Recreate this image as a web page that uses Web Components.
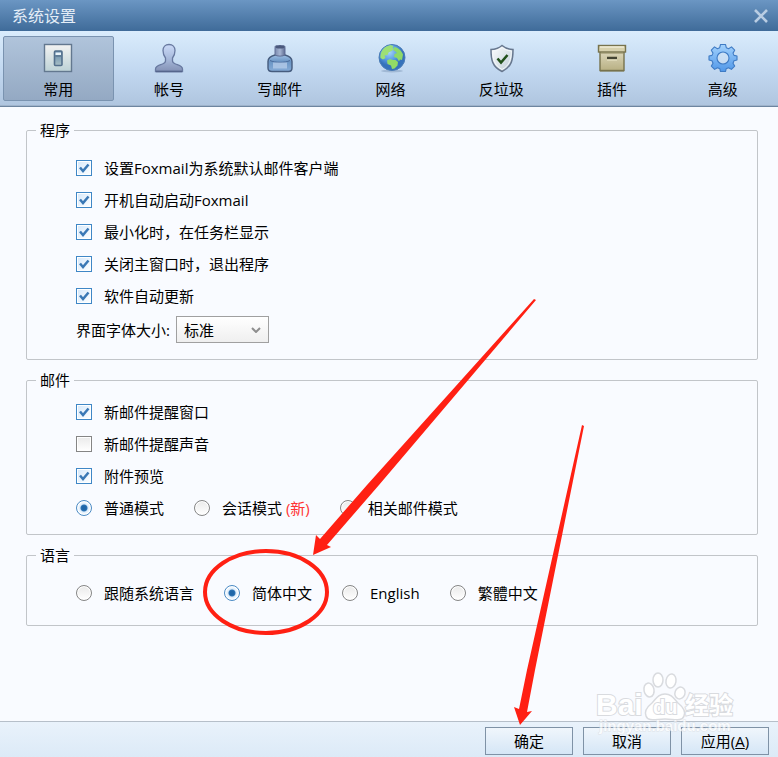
<!DOCTYPE html>
<html lang="zh-CN">
<head>
<meta charset="utf-8">
<meta name="viewport" content="width=device-width, initial-scale=1">
<title>系统设置</title>
<style>
    body {
        margin: 0;
        background: #f9fbff;
        color: #000;
        font: 15px/20px "Open Sans", "Noto Sans CJK SC", sans-serif;
    }
</style>
</head>
<body>
<settings-window heading="系统设置">
    <tool-tab slot="tabs" icon="switch" active>常用</tool-tab>
    <tool-tab slot="tabs" icon="user">帐号</tool-tab>
    <tool-tab slot="tabs" icon="ink">写邮件</tool-tab>
    <tool-tab slot="tabs" icon="globe">网络</tool-tab>
    <tool-tab slot="tabs" icon="shield">反垃圾</tool-tab>
    <tool-tab slot="tabs" icon="box">插件</tool-tab>
    <tool-tab slot="tabs" icon="gear">高级</tool-tab>

    <settings-group heading="程序">
        <check-row checked>设置Foxmail为系统默认邮件客户端</check-row>
        <check-row checked>开机自动启动Foxmail</check-row>
        <check-row checked>最小化时，在任务栏显示</check-row>
        <check-row checked>关闭主窗口时，退出程序</check-row>
        <check-row checked>软件自动更新</check-row>
        <select-row label="界面字体大小:" options="标准|大|特大"></select-row>
    </settings-group>

    <settings-group heading="邮件" compact>
        <check-row checked>新邮件提醒窗口</check-row>
        <check-row>新邮件提醒声音</check-row>
        <check-row checked>附件预览</check-row>
        <radio-row name="mode" options="普通模式|会话模式 (新)|相关邮件模式" selected="0"></radio-row>
    </settings-group>

    <settings-group heading="语言">
        <radio-row name="language" options="跟随系统语言|简体中文|English|繁體中文" selected="1"></radio-row>
    </settings-group>

    <dialog-button slot="actions">确定</dialog-button>
    <dialog-button slot="actions">取消</dialog-button>
    <dialog-button slot="actions">应用(<u>A</u>)</dialog-button>
</settings-window>
<brand-mark></brand-mark>
<arrow-notes></arrow-notes>

<script>
// ----------------------------------------------------
// Toolbar icons, all on a 30x30 grid
// ----------------------------------------------------
const ICONS = {
    switch: `
        <defs>
            <linearGradient id="a" x2="0" y2="1"><stop stop-color="#f3f3f2"/><stop offset="1" stop-color="#bdd2d6"/></linearGradient>
            <linearGradient id="b" x2="0" y2="1"><stop stop-color="#5f86a8"/><stop offset="1" stop-color="#a9c0c6"/></linearGradient>
        </defs>
        <rect x="1.5" y="1.5" width="27" height="27" fill="url(#a)" stroke="#63788f" stroke-width="1.4"/>
        <rect x="11.5" y="8" width="7.5" height="14.5" rx="1" fill="url(#b)" stroke="#54708c" stroke-width="1.6"/>
        <path d="M12.5 9.5h5.5v2.5h-5.5z" fill="#e8f2f8"/>
        <path d="M12.5 13h5.5" stroke="#4a6580"/>`,
    user: `
        <defs><linearGradient id="a" x2="0" y2="1"><stop stop-color="#cbdaf8"/><stop offset=".5" stop-color="#a9bbdc"/><stop offset="1" stop-color="#8391b5"/></linearGradient></defs>
        <path d="M15 1.5c-3.700 0-6 2.500-6 6 0 3 .9 5.500 2.500 7.500v3c0 1.500-1 2.200-3 3C4.500 22.500 1.500 23 1.500 26v2.500h27V26c0-3-3-3.500-7-5-2-.8-3-1.500-3-3v-3c1.600-2 2.500-4.500 2.500-7.500 0-3.500-2.300-6-6-6z" fill="url(#a)" stroke="#6879a0" stroke-width="1.300"/>
        <path d="M2 28.500h26" stroke="#55658c" stroke-width="1.500"/>`,
    ink: `
        <defs>
            <linearGradient id="a" x2="0" y2="1"><stop stop-color="#9ebfe4"/><stop offset=".4" stop-color="#6b95c4"/><stop offset="1" stop-color="#86acd8"/></linearGradient>
            <linearGradient id="b" x2="1" y2="0"><stop stop-color="#7a89ae"/><stop offset=".5" stop-color="#a5b4d2"/><stop offset="1" stop-color="#5d6b91"/></linearGradient>
        </defs>
        <path d="M10 12c-4 1-7 3-7 6.500V25c0 2.500 1.500 3.500 4 3.500h16.500c2.500 0 3.500-1 3.500-3.500v-6.500C27 15 24 13 20 12z" fill="url(#a)" stroke="#465c7e" stroke-width="1.400"/>
        <path d="M10 4.500c0-2 1-2 5-2s5 0 5 2V12c-2 1.500-8 1.500-10 0z" fill="url(#b)" stroke="#606f96"/>
        <ellipse cx="15" cy="4" rx="4.500" ry="1.500" fill="#4a587c"/>
        <path d="M5 17.500c5 2.500 15 2.500 20 0" fill="none" stroke="#4a6b9c"/>
        <rect x="8" y="19.500" width="14" height="6" fill="#b4cbe9" opacity=".8"/>`,
    globe: `
        <defs><radialGradient id="a" cx=".4" cy=".3"><stop stop-color="#a5d3fa"/><stop offset=".6" stop-color="#5a9de3"/><stop offset="1" stop-color="#3572bb"/></radialGradient></defs>
        <ellipse cx="16" cy="28" rx="11" ry="1.500" fill="#7f9ab9" opacity=".5"/>
        <circle cx="16" cy="14.500" r="13" fill="url(#a)" stroke="#4a7cb6"/>
        <path d="M4.500 15c-.5-5 2-9.500 6-11.500l4-1.500 3 1-1 2 1.500 1-2.500 2-3 1.500-1 2.500-3 .5 1 2.500-2.500 1.500z" fill="#9de075"/>
        <path d="M18 4c4 .5 7.500 3.500 9 7.500l-1 5.500-2-.5-1 2-2-3.500-3-1 .5-3 2.500-1-2-2-1.500-.5z" fill="#8ed969"/>
        <path d="M11 17.500l3-1.500 3 1 2.500 0 2.500 2-.5 3.500-3 3-2.500.5-1-3.500-3.500-1.500z" fill="#93db65"/>`,
    shield: `
        <defs><linearGradient id="a" x2="1" y2="1"><stop stop-color="#fff"/><stop offset="1" stop-color="#bccbd5"/></linearGradient></defs>
        <path d="M16 2.500c-3 2.500-7 4-11 4 0 10 1 17 11 22 10-5 11-12 11-22-4 0-8-1.500-11-4z" fill="url(#a)" stroke="#67778e" stroke-width="1.500"/>
        <path d="M16 4.500c-2.500 2-6 3.300-9.300 3.500C7 16.500 8 22 16 26.500 24 22 25 16.500 25.300 8 22 7.800 18.500 6.500 16 4.500z" fill="none" stroke="#f4f8fb"/>
        <path d="M11.500 15.500l3.500 4 6.500-7.500" fill="none" stroke="#22501b" stroke-width="2.600"/>`,
    box: `
        <defs><linearGradient id="a" x2="0" y2="1"><stop stop-color="#ddd8bd"/><stop offset="1" stop-color="#b8b083"/></linearGradient></defs>
        <path d="M3 28.500h24" stroke="#81805f" opacity=".6"/>
        <rect x="3" y="8" width="24" height="19.500" fill="url(#a)" stroke="#77734d" stroke-width="1.400"/>
        <rect x="1.500" y="2.500" width="27" height="6.500" fill="#d7d1ad" stroke="#77734d" stroke-width="1.400"/>
        <path d="M3 4h24" stroke="#f3f0dc" stroke-width="1.300"/>
        <path d="M4 10h22" stroke="#8b865d"/>
        <path d="M10 15h10" stroke="#444433" stroke-width="2.500"/>
        <path d="M10 17h10" stroke="#eeeacb"/>`,
    gear: `
        <defs><linearGradient id="a" x2="0" y2="1"><stop stop-color="#a3d2fd"/><stop offset="1" stop-color="#5097e8"/></linearGradient></defs>
        <path fill-rule="evenodd" d="M12.500 1.500h5l.8 3.200 2.300 1 2.900-1.800 3.200 3.300-1.700 2.900 1 2.300 3 .6v4l-3 .8-1 2.400 1.700 2.900-3.300 3.300-2.900-1.700-2.300 1-.7 2.800h-5l-.7-2.800-2.300-1-2.900 1.700-3.300-3.300L5 20.200l-1-2.400-3-.8v-4l3-.6 1-2.300-1.700-2.900 3.200-3.300 2.900 1.800 2.300-1zM15 9a6 6 0 1 0 0 12 6 6 0 0 0 0-12z" fill="url(#a)" stroke="#3f7bc4" stroke-width="1.100" stroke-linejoin="round"/>`
};

// Shared look of tick boxes and radios
const CHOICE_STYLES = `
    label {
        display: flex;
        align-items: center;
        gap: 12px;
        white-space: pre;
    }

    input {
        appearance: none;
        box-sizing: border-box;
        flex: none;
        width: 16px;
        height: 16px;
        margin: 0;
        border: 1px solid #858585;
        background: linear-gradient(#eaeaea, #fff);
        box-shadow: inset 0 0 0 1px #fff;
    }
`;

function attach(host, html) {
    host.attachShadow({ mode: 'open' }).innerHTML = html;
    return host.shadowRoot;
}

class SettingsWindow extends HTMLElement {
    connectedCallback() {
        attach(this, `
            <style>
                :host {
                    display: flex;
                    flex-direction: column;
                    min-height: 100vh;
                }

                header {
                    display: flex;
                    align-items: center;
                    justify-content: space-between;
                    height: 31px;
                    padding: 0 8px 0 12px;
                    background: linear-gradient(#6b96c3, #3f6b99);
                    color: #e4edf7;
                }

                h1 {
                    margin: 0;
                    font-size: 16px;
                    font-weight: 400;
                    line-height: 28px;
                }

                .close {
                    display: flex;
                    padding: 0;
                    border: 0;
                    background: none;
                }

                nav {
                    display: flex;
                    padding: 5px 0 5px 3px;
                    border-bottom: 1px solid #6d85a0;
                    box-shadow: inset 0 -1px #9fb3cb;
                    background: linear-gradient(#daecfc, #c3d9f1 50%, #afc5df);
                }

                main {
                    display: flex;
                    flex: 1;
                    flex-direction: column;
                    gap: 10px;
                    padding: 13px 20px 24px 26px;
                }

                footer {
                    display: flex;
                    justify-content: flex-end;
                    gap: 10px;
                    padding: 5px 9px 2px;
                    border-top: 1px solid #b6bfc9;
                    background: linear-gradient(#e9f2fb, #dceaf7);
                }
            </style>
            <header>
                <h1>${this.getAttribute('heading')}</h1>
                <button class="close" aria-label="关闭">
                    <svg width="18" height="18" viewBox="0 0 18 18"><path d="M3 3l12 12M15 3L3 15" stroke="#b9cde3" stroke-width="2.600"/></svg>
                </button>
            </header>
            <nav><slot name="tabs"></slot></nav>
            <main><slot></slot></main>
            <footer><slot name="actions"></slot></footer>
        `);
    }
}

class ToolTab extends HTMLElement {
    connectedCallback() {
        attach(this, `
            <style>
                :host {
                    display: block;
                    flex: 0 1 111px;
                }

                button {
                    display: flex;
                    flex-direction: column;
                    align-items: center;
                    gap: 6px;
                    width: 100%;
                    padding: 6px 0 1px;
                    border: 1px solid transparent;
                    border-radius: 2px;
                    background: none;
                    color: inherit;
                    font: inherit;
                }

                :host([active]) button {
                    border-color: #7a93b0;
                    background: linear-gradient(#b0c4db, #94a9c3);
                }
            </style>
            <button>
                <svg width="30" height="30" viewBox="0 0 30 30" aria-hidden="true">${ICONS[this.getAttribute('icon')]}</svg>
                <span><slot></slot></span>
            </button>
        `);
    }
}

class SettingsGroup extends HTMLElement {
    connectedCallback() {
        attach(this, `
            <style>
                :host {
                    display: block;
                }

                fieldset {
                    margin: 0;
                    padding: 12px 9px 16px;
                    border: 1px solid #c2c5c9;
                    border-radius: 2px;
                }

                :host([compact]) fieldset {
                    padding-top: 6px;
                    padding-bottom: 10px;
                }

                legend {
                    padding: 0 4px;
                }

                .rows {
                    padding-left: 40px;
                }
            </style>
            <fieldset>
                <legend>${this.getAttribute('heading')}</legend>
                <div class="rows"><slot></slot></div>
            </fieldset>
        `);
    }
}

class CheckRow extends HTMLElement {
    connectedCallback() {
        const checked = this.hasAttribute('checked') ? 'checked' : '';
        attach(this, `
            <style>
                ${CHOICE_STYLES}

                :host {
                    display: flex;
                    align-items: center;
                    height: 32px;
                }

                input:checked {
                    border-color: #3f87c6;
                    background: linear-gradient(135deg, #d5e8fb, #fff);
                }

                .box {
                    display: grid;
                }

                .box > * {
                    grid-area: 1 / 1;
                }

                svg {
                    display: none;
                    pointer-events: none;
                }

                input:checked + svg {
                    display: block;
                }
            </style>
            <label>
                <span class="box">
                    <input type="checkbox" ${checked}>
                    <svg width="16" height="16" viewBox="0 0 16 16"><path d="M4 7.500l3 3.500 5.500-6.500" fill="none" stroke="#3a78b5" stroke-width="2.500"/></svg>
                </span>
                <span><slot></slot></span>
            </label>
        `);
    }
}

// All radios of a row live in one shadow root, so the browser groups them by name
class RadioRow extends HTMLElement {
    connectedCallback() {
        const name = this.getAttribute('name');
        const selected = Number(this.getAttribute('selected'));
        const items = this.getAttribute('options').split('|').map((text, i) => `
            <label><input type="radio" name="${name}" ${i === selected ? 'checked' : ''}><span>${text.replace(/\(.*\)/, '<em>$&</em>')}</span></label>
        `).join('');

        attach(this, `
            <style>
                ${CHOICE_STYLES}

                :host {
                    display: flex;
                    flex-wrap: wrap;
                    align-items: center;
                    gap: 0 30px;
                    min-height: 32px;
                }

                input {
                    border-radius: 50%;
                }

                input:checked {
                    border-color: #4a8ac4;
                    background: radial-gradient(circle, #1f66a8 0 2px, #2f75b5 3px, #dcecfb 4px, #fff 7px);
                }

                em {
                    color: #f33;
                    font-style: normal;
                }
            </style>
            ${items}
        `);
    }
}

class SelectRow extends HTMLElement {
    connectedCallback() {
        const options = this.getAttribute('options').split('|').map(text => `<option>${text}</option>`).join('');
        attach(this, `
            <style>
                :host {
                    display: flex;
                    align-items: center;
                    gap: 6px;
                    padding-top: 4px;
                }

                .field {
                    display: grid;
                    align-items: center;
                }

                .field > * {
                    grid-area: 1 / 1;
                }

                select {
                    appearance: none;
                    box-sizing: border-box;
                    width: 93px;
                    height: 27px;
                    padding: 0 7px;
                    border: 1px solid #a0a0a0;
                    border-radius: 0;
                    background: linear-gradient(#fff, #efefef);
                    color: inherit;
                    font: inherit;
                }

                svg {
                    justify-self: end;
                    margin-right: 8px;
                    pointer-events: none;
                }
            </style>
            <label for="choice">${this.getAttribute('label')}</label>
            <span class="field">
                <select id="choice">${options}</select>
                <svg width="10" height="6" viewBox="0 0 10 6"><path d="M1 1l4 4 4-4" fill="none" stroke="#8e8e8e" stroke-width="2"/></svg>
            </span>
        `);
    }
}

class DialogButton extends HTMLElement {
    connectedCallback() {
        attach(this, `
            <style>
                :host {
                    display: block;
                }

                button {
                    min-width: 88px;
                    height: 28px;
                    padding: 0 12px;
                    border: 1px solid #7f92a6;
                    background: linear-gradient(#f0f6fc, #d5e6f6);
                    color: inherit;
                    font: inherit;
                }
            </style>
            <button><slot></slot></button>
        `);
    }
}

// Translucent stamp over the lower right corner
class BrandMark extends HTMLElement {
    connectedCallback() {
        attach(this, `
            <style>
                :host {
                    position: absolute;
                    right: 40px;
                    bottom: 14px;
                    pointer-events: none;
                }

                svg {
                    display: block;
                }

                text {
                    font-family: "Liberation Sans", "Noto Sans CJK SC", sans-serif;
                    font-weight: 700;
                    paint-order: stroke;
                }
            </style>
            <svg width="142" height="76" viewBox="0 0 142 76" fill="#fff" stroke="#d9dbdf" stroke-width="2">
                <text x="0" y="48" font-size="30">Bai</text>
                <g stroke-width="1.500">
                    <path d="M69 27c-7 0-9 5-13 9-5 4-8 8-6 13 2 6 10 3 19 3s17 3 19-3c2-5-1-9-6-13-4-4-6-9-13-9z"/>
                    <ellipse cx="53" cy="23" rx="5" ry="7" transform="rotate(-12 53 23)"/>
                    <ellipse cx="62" cy="13" rx="5" ry="7"/>
                    <ellipse cx="75" cy="14" rx="5" ry="7" transform="rotate(10 75 14)"/>
                    <ellipse cx="84" cy="26" rx="5" ry="6" transform="rotate(20 84 26)"/>
                </g>
                <text x="57" y="47" font-size="20">du</text>
                <text x="89" y="47" font-size="24">经验</text>
                <text x="3" y="64" font-size="15" opacity=".7" stroke-width="1">jingyan.baidu.com</text>
            </svg>
        `);
    }
}

// Red marks pointing at the language choice and the confirm button
class ArrowNotes extends HTMLElement {
    connectedCallback() {
        attach(this, `
            <style>
                :host {
                    position: absolute;
                    top: 0;
                    left: 0;
                    pointer-events: none;
                }

                svg {
                    display: block;
                }
            </style>
            <svg width="778" height="757" viewBox="0 0 778 757" fill="#ff2013">
                <path d="M534 299l2 1L379 485 327 545l4 2-18 8 3-20 4 4 47-54z"/>
                <path d="M582 425l2 1-49 244-8 42 5-1-12 14-6-18 5 2 8-39z"/>
                <ellipse cx="266" cy="592" rx="61" ry="41" fill="none" stroke="#ff2013" stroke-width="4"/>
            </svg>
        `);
    }
}

customElements.define('settings-window', SettingsWindow);
customElements.define('tool-tab', ToolTab);
customElements.define('settings-group', SettingsGroup);
customElements.define('check-row', CheckRow);
customElements.define('radio-row', RadioRow);
customElements.define('select-row', SelectRow);
customElements.define('dialog-button', DialogButton);
customElements.define('brand-mark', BrandMark);
customElements.define('arrow-notes', ArrowNotes);
</script>
</body>
</html>
